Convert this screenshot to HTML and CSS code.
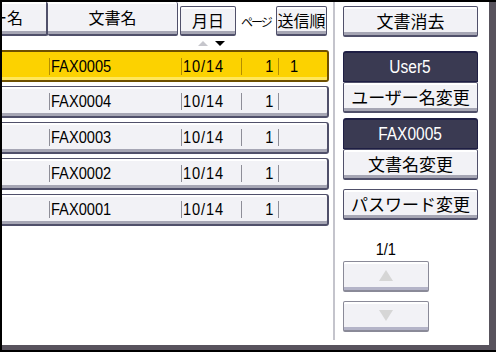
FILE: index.html
```html
<!DOCTYPE html>
<html lang="ja">
<head>
    <meta charset="UTF-8">
    <meta name="viewport" content="width=device-width, initial-scale=1.0">
    <title>文書一覧</title>
    <link rel="stylesheet" href="styles.css">
</head>
<body>
    <div class="screen">
        <div class="panel">
            <div class="list">
                <div class="list-head">
                    <div class="hcell h-user"><span>ユーザー名</span></div>
                    <div class="hcell h-name">文書名</div>
                    <div class="hcell h-date">月日</div>
                    <div class="hlabel">ページ</div>
                    <div class="hcell h-order">送信順</div>
                </div>

                <div class="sort">
                    <span class="tri tri-up"></span>
                    <span class="tri tri-down"></span>
                </div>

                <div class="rows">
                    <div class="row selected">
                        <span class="col c-user"></span>
                        <span class="col c-name"><span class="t">FAX0005</span></span>
                        <span class="col c-date"><span class="t">10/14</span></span>
                        <span class="col c-page"><span class="t">1</span></span>
                        <span class="col c-order"><span class="t">1</span></span>
                    </div>
                    <div class="row">
                        <span class="col c-user"></span>
                        <span class="col c-name"><span class="t">FAX0004</span></span>
                        <span class="col c-date"><span class="t">10/14</span></span>
                        <span class="col c-page"><span class="t">1</span></span>
                        <span class="col c-order"></span>
                    </div>
                    <div class="row">
                        <span class="col c-user"></span>
                        <span class="col c-name"><span class="t">FAX0003</span></span>
                        <span class="col c-date"><span class="t">10/14</span></span>
                        <span class="col c-page"><span class="t">1</span></span>
                        <span class="col c-order"></span>
                    </div>
                    <div class="row">
                        <span class="col c-user"></span>
                        <span class="col c-name"><span class="t">FAX0002</span></span>
                        <span class="col c-date"><span class="t">10/14</span></span>
                        <span class="col c-page"><span class="t">1</span></span>
                        <span class="col c-order"></span>
                    </div>
                    <div class="row">
                        <span class="col c-user"></span>
                        <span class="col c-name"><span class="t">FAX0001</span></span>
                        <span class="col c-date"><span class="t">10/14</span></span>
                        <span class="col c-page"><span class="t">1</span></span>
                        <span class="col c-order"></span>
                    </div>
                </div>
            </div>

            <div class="side">
                <button class="btn btn-delete">文書消去</button>
                <div class="field field-user"><span class="t">User5</span></div>
                <button class="btn">ユーザー名変更</button>
                <div class="field field-doc"><span class="t">FAX0005</span></div>
                <button class="btn">文書名変更</button>
                <button class="btn btn-pass">パスワード変更</button>
                <div class="pager"><span class="t">1/1</span></div>
                <button class="btn btn-step btn-up"><span class="tri tri-step-up"></span></button>
                <button class="btn btn-step btn-down"><span class="tri tri-step-down"></span></button>
            </div>
        </div>
    </div>
</body>
</html>
```

FILE: styles.css
```css
body {
    margin: 0;
    padding: 0;
    background-color: #000;
    font-family: "Liberation Sans", "Noto Sans CJK JP", sans-serif;
    color: #000;
}

.screen {
    width: 496px;
    height: 352px;
    box-sizing: border-box;
    padding: 2px 0 2px 2px;
    background-color: #000;
}

.panel {
    height: 100%;
    box-sizing: border-box;
    display: flex;
    background-color: #fff;
    border-right: 7px solid #58535d;
    border-bottom: 5px solid #58535d;
}

/* narrow latin text, like the panel's bitmap font */
.t {
    display: inline-block;
    transform: scaleX(0.86);
    transform-origin: left center;
}

/* left: document list */

.list {
    width: 331px;
    display: flex;
    flex-direction: column;
}

.list-head {
    height: 34px;
    display: flex;
    align-items: flex-end;
}

.hcell,
.btn,
.row {
    background-color: #f2f2f6;
    border: 1px solid #50506a;
    border-bottom-width: 2px;
    box-shadow: inset 0 -3px 0 #a6a6b4, inset 0 2px 0 #fff;
}

.hcell {
    box-sizing: border-box;
    display: flex;
    align-items: center;
    justify-content: center;
    font-family: "Noto Sans CJK JP", sans-serif;
    font-size: 16px;
    padding-bottom: 2px;
    border-radius: 2px;
}

.h-user {
    width: 46px;
    height: 34px;
    border-left: none;
    border-top: none;
    border-right-width: 2px;
    overflow: hidden;
    justify-content: flex-end;
    padding-right: 23px;
    white-space: nowrap;
    border-radius: 0 2px 2px 0;
}

.h-name {
    width: 130px;
    height: 34px;
    border-top: none;
    border-left: none;
    margin-right: 2px;
}

.h-date {
    width: 56px;
    height: 30px;
}

.hlabel {
    width: 40px;
    height: 30px;
    display: flex;
    align-items: center;
    justify-content: center;
    font-family: "Noto Sans CJK JP", sans-serif;
    font-size: 12px;
    letter-spacing: -2px;
}

.h-order {
    width: 51px;
    height: 30px;
}

.sort {
    height: 14px;
    box-sizing: border-box;
    padding: 5px 0 0 196px;
    display: flex;
    gap: 7px;
}

.tri {
    width: 0;
    height: 0;
    border-left: 5px solid transparent;
    border-right: 5px solid transparent;
}

.tri-up {
    border-bottom: 5px solid #c6c6cc;
}

.tri-down {
    border-top: 5px solid #000;
}

.rows {
    display: flex;
    flex-direction: column;
    gap: 4px;
}

.row {
    width: 327px;
    height: 32px;
    box-sizing: border-box;
    display: flex;
    align-items: center;
    border-left: none;
    border-right-width: 2px;
    border-radius: 0 3px 3px 0;
    font-size: 17px;
}

.row.selected {
    background-color: #fcd200;
    border-color: #6e5000;
    border-top-width: 2px;
    box-shadow: inset 0 -3px 0 #ffe65a;
}

.col {
    box-sizing: border-box;
    height: 17px;
    line-height: 17px;
    display: flex;
    align-items: center;
    white-space: nowrap;
}

.c-user {
    width: 47px;
}

.c-name,
.c-date,
.c-order {
    border-left: 1px solid #8e8e98;
    padding-left: 1px;
}

.c-name {
    width: 132px;
}

.c-date {
    width: 60px;
}

.c-date .t {
    letter-spacing: 1px;
}

.c-page {
    width: 37px;
    border-left: 1px solid #8e8e98;
    justify-content: flex-end;
    padding-right: 5px;
}

.c-page .t {
    transform-origin: right center;
}

.c-order {
    width: 49px;
    padding-left: 11px;
}

.selected .col {
    border-color: #b48e00;
}

/* right: side menu */

.side {
    width: 156px;
    height: 338px;
    box-sizing: border-box;
    border-left: 2px solid #c4c4cc;
    display: flex;
    flex-direction: column;
    padding-left: 8px;
}

.side .t {
    transform-origin: center;
}

.btn {
    width: 135px;
    height: 31px;
    box-sizing: border-box;
    margin: 0;
    padding: 0 0 2px;
    font-family: "Noto Sans CJK JP", sans-serif;
    font-size: 17px;
    color: #000;
    border-radius: 2px;
}

.btn-delete {
    margin-top: 4px;
}

.field {
    width: 135px;
    height: 31px;
    box-sizing: border-box;
    display: flex;
    align-items: center;
    justify-content: center;
    background-color: #3a3a52;
    border: 1px solid #1e1e44;
    border-top-width: 2px;
    border-radius: 3px 3px 0 0;
    color: #fff;
    font-size: 18px;
}

.field-user {
    margin-top: 14px;
}

.field-doc {
    margin-top: 5px;
}

.btn-pass {
    margin-top: 9px;
}

.pager {
    width: 86px;
    margin-top: 20px;
    height: 21px;
    text-align: center;
    font-size: 17px;
}

.btn-step {
    width: 86px;
    display: flex;
    align-items: center;
    justify-content: center;
    border-color: #8a8a98;
    box-shadow: inset 0 -3px 0 #b4b4c8, inset 0 2px 0 #fff;
}

.btn-down {
    margin-top: 9px;
}

.tri-step-up {
    border-left-width: 7px;
    border-right-width: 7px;
    border-bottom: 11px solid #d6d6d6;
}

.tri-step-down {
    border-left-width: 7px;
    border-right-width: 7px;
    border-top: 11px solid #d6d6d6;
}
```
